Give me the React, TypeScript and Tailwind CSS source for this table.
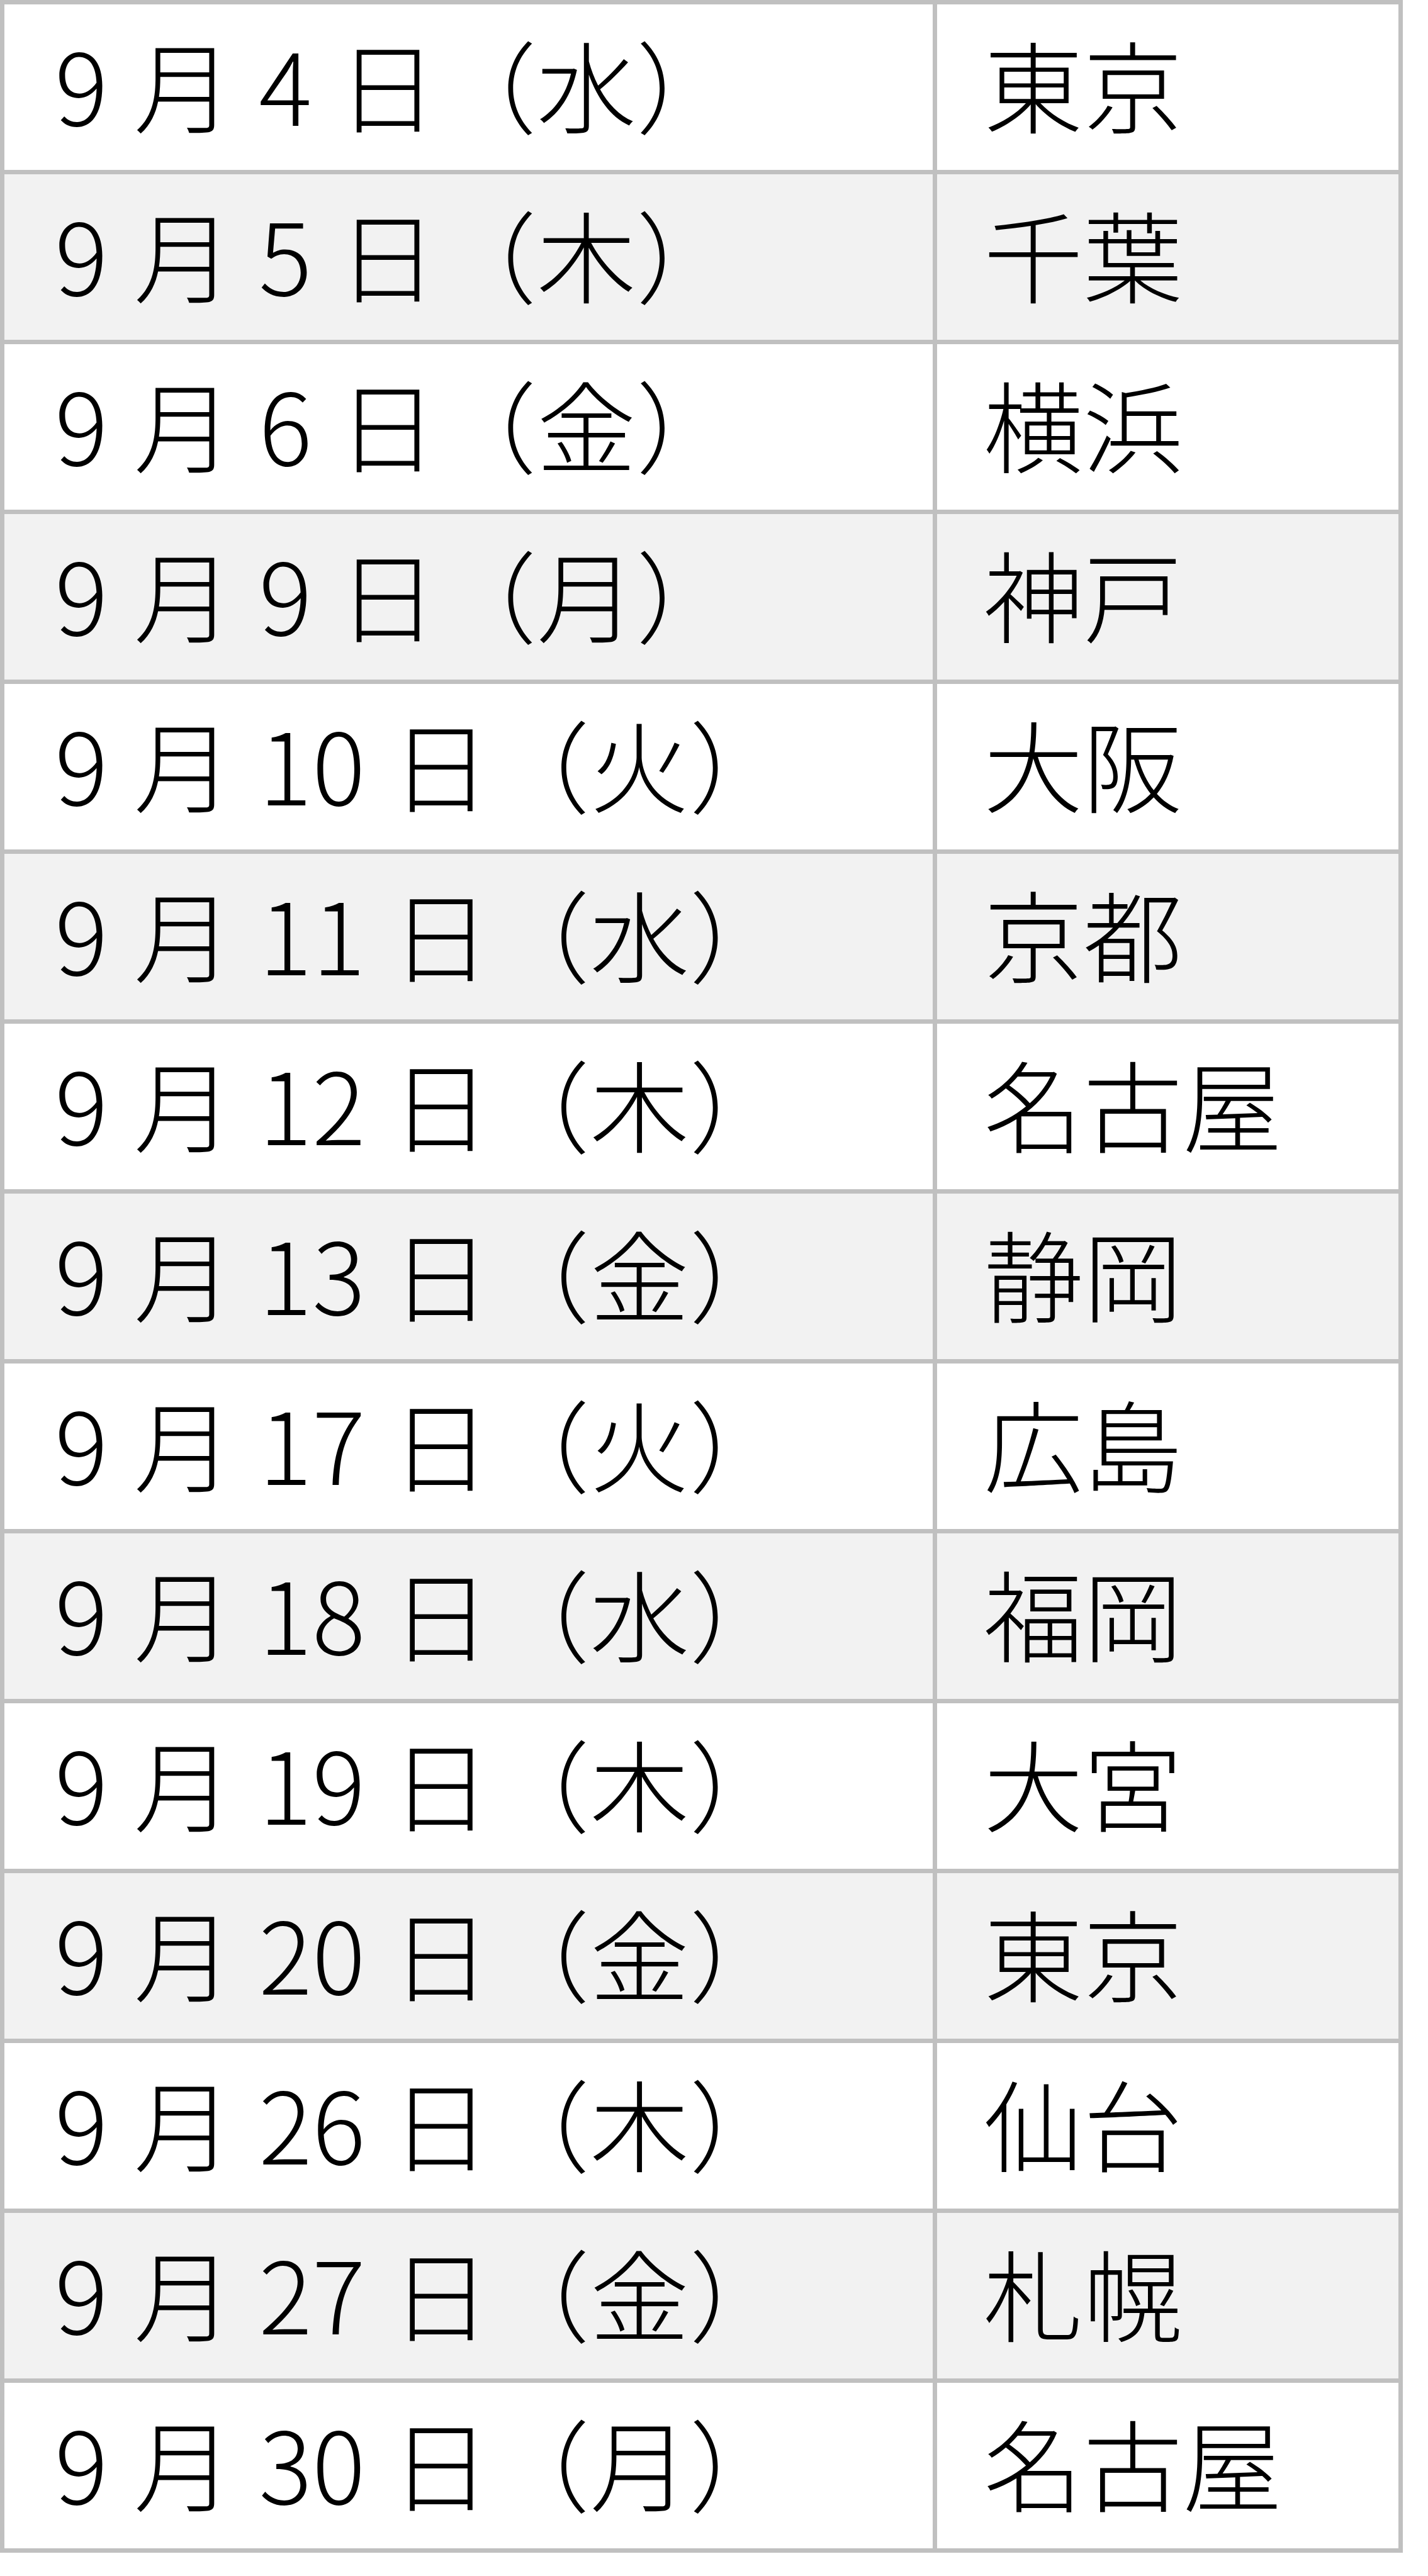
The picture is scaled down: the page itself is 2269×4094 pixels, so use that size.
import * as React from "react";

type Row = { day: string; week: string; city: string };

const rows: Row[] = [
  { day: "4", week: "水", city: "東京" },
  { day: "5", week: "木", city: "千葉" },
  { day: "6", week: "金", city: "横浜" },
  { day: "9", week: "月", city: "神戸" },
  { day: "10", week: "火", city: "大阪" },
  { day: "11", week: "水", city: "京都" },
  { day: "12", week: "木", city: "名古屋" },
  { day: "13", week: "金", city: "静岡" },
  { day: "17", week: "火", city: "広島" },
  { day: "18", week: "水", city: "福岡" },
  { day: "19", week: "木", city: "大宮" },
  { day: "20", week: "金", city: "東京" },
  { day: "26", week: "木", city: "仙台" },
  { day: "27", week: "金", city: "札幌" },
  { day: "30", week: "月", city: "名古屋" },
];

const App: React.FC = () => {
  return (
    <div className="min-h-screen bg-white font-['Noto_Sans_CJK_JP','Noto_Sans',sans-serif] text-black">
      <div className="grid w-[2229px] grid-cols-[1475px_733px] gap-[7px] bg-[#c0c0c0] p-[7px]">
        {rows.map((r, i) => {
          const bg = i % 2 === 1 ? "bg-[#f2f2f2]" : "bg-white";
          return (
            <React.Fragment key={i}>
              <div className={`flex h-[263px] items-center pb-[14px] pl-[80px] text-[158px] font-light leading-none ${bg}`}>
                <span className="whitespace-pre [word-spacing:6px]">{`9 月 ${r.day} 日（${r.week}）`}</span>
              </div>
              <div className={`flex h-[263px] items-center pb-[14px] pl-[74px] text-[158px] font-light leading-none ${bg}`}>
                <span>{r.city}</span>
              </div>
            </React.Fragment>
          );
        })}
      </div>
    </div>
  );
};

export default App;
